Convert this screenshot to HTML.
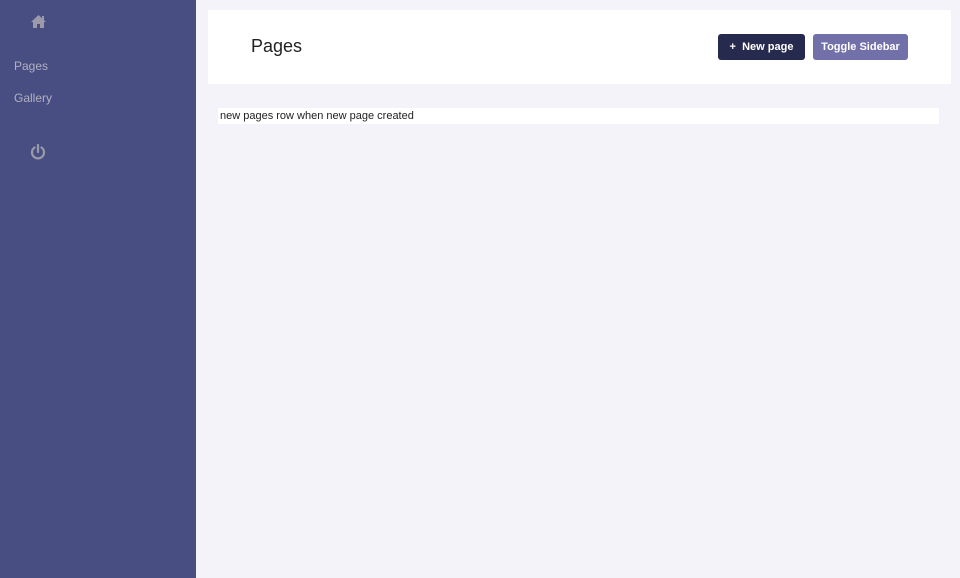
<!DOCTYPE html>
<html><head><style>
body{margin:0;width:960px;height:578px;background:#f5f3fa;font-family:"Liberation Sans",sans-serif;position:relative;overflow:hidden}
.sb{position:absolute;left:0;top:0;width:196px;height:578px;background:#484e82}
.sb .l{position:absolute;left:14px;font-size:12px;color:#b0b0c0}
.hdr{position:absolute;left:208px;top:10px;width:743px;height:74px;background:#fff}
.hdr h1{position:absolute;left:43px;top:26px;margin:0;font-size:18px;font-weight:normal;color:#222}
.b{position:absolute;top:24px;height:26px;border-radius:3px;color:#fff;font-size:11px;font-weight:bold;line-height:26px;text-align:center}
.row{position:absolute;left:218px;top:108px;width:721px;height:16px;background:#fff;font-size:11px;line-height:17px;color:#222;padding-left:2px;box-sizing:border-box}
</style></head><body>
<div class="sb">
<svg style="position:absolute;left:30px;top:14px" width="17" height="15" viewBox="0 0 17 15"><path d="M8.5 1 L1 8 L3 8 L3 14 L7 14 L7 10 L10 10 L10 14 L14 14 L14 8 L16 8 Z" fill="#9a9aaa"/><rect x="12" y="2" width="2" height="4" fill="#9a9aaa"/></svg>
<div class="l" style="top:59px">Pages</div>
<div class="l" style="top:91px">Gallery</div>
<svg style="position:absolute;left:29px;top:143px" width="18" height="18" viewBox="0 0 18 18"><path d="M5.5 4.5 A6 6 0 1 0 12.5 4.5" fill="none" stroke="#9a9aaa" stroke-width="2.2" stroke-linecap="round"/><line x1="9" y1="2" x2="9" y2="9" stroke="#9a9aaa" stroke-width="2.2" stroke-linecap="round"/></svg>
</div>
<div class="hdr"><h1>Pages</h1>
<div class="b" style="left:510px;width:87px;background:#262a4e">+&nbsp; New page</div>
<div class="b" style="left:605px;width:95px;background:#7270a8">Toggle Sidebar</div>
</div>
<div class="row">new pages row when new page created</div>
</body></html>
